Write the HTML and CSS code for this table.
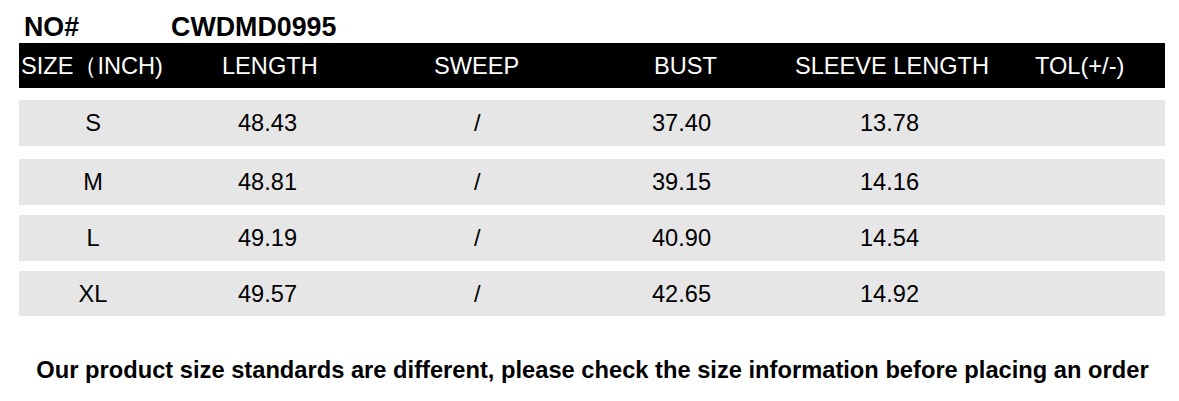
FILE: index.html
```html
<!DOCTYPE html>
<html>
<head>
<meta charset="utf-8">
<link rel="stylesheet" href="styles.css">
</head>
<body>
<div class="sheet">
  <div class="title">
    <span class="no">NO#</span>
    <span class="code">CWDMD0995</span>
  </div>
  <div class="table">
    <div class="row head">
      <div class="c c1">SIZE（INCH)</div>
      <div class="c c2">LENGTH</div>
      <div class="c c3">SWEEP</div>
      <div class="c c4">BUST</div>
      <div class="c c5">SLEEVE LENGTH</div>
      <div class="c c6">TOL(+/-)</div>
    </div>
    <div class="row data">
      <div class="c c1">S</div>
      <div class="c c2">48.43</div>
      <div class="c c3">/</div>
      <div class="c c4">37.40</div>
      <div class="c c5">13.78</div>
      <div class="c c6"></div>
    </div>
    <div class="row data">
      <div class="c c1">M</div>
      <div class="c c2">48.81</div>
      <div class="c c3">/</div>
      <div class="c c4">39.15</div>
      <div class="c c5">14.16</div>
      <div class="c c6"></div>
    </div>
    <div class="row data">
      <div class="c c1">L</div>
      <div class="c c2">49.19</div>
      <div class="c c3">/</div>
      <div class="c c4">40.90</div>
      <div class="c c5">14.54</div>
      <div class="c c6"></div>
    </div>
    <div class="row data">
      <div class="c c1">XL</div>
      <div class="c c2">49.57</div>
      <div class="c c3">/</div>
      <div class="c c4">42.65</div>
      <div class="c c5">14.92</div>
      <div class="c c6"></div>
    </div>
  </div>
  <p class="note">Our product size standards are different, please check the size information before placing an order</p>
</div>
</body>
</html>
```

FILE: styles.css
```css
html, body {
  margin: 0;
  padding: 0;
  background: #ffffff;
}

.sheet {
  width: 1179px;
  height: 401px;
  font-family: "Liberation Sans", Arial, sans-serif;
  color: #000;
  overflow: hidden;
}

.title {
  height: 43px;
  display: flex;
  align-items: flex-end;
  padding-left: 24px;
  font-weight: bold;
  font-size: 26.8px;
  line-height: 26px;
  box-sizing: border-box;
  padding-bottom: 3px;
}

.title .code {
  margin-left: 92px;
}

.table {
  margin-left: 19px;
  width: 1146px;
  display: flex;
  flex-direction: column;
}

.row {
  display: grid;
  grid-template-columns: 181px 200px 220px 140px 250px 155px;
  align-items: center;
  font-size: 23.6px;
  line-height: 26px;
}

.head {
  height: 45px;
  background: #000;
  color: #fff;
}

.data {
  height: 46px;
  background: #e6e6e6;
  margin-top: 10px;
}

.data:nth-child(2) {
  margin-top: 12px;
}

.data:nth-child(3) {
  margin-top: 13px;
}

.data:last-child {
  height: 45px;
}

.c {
  white-space: nowrap;
}

.head .c1 { padding-left: 2px; }
.head .c2 { padding-left: 22px; }
.head .c3 { padding-left: 34px; }
.head .c4 { padding-left: 34px; }
.head .c5 { padding-left: 35px; }
.head .c6 { padding-left: 25px; }

.data .c1 { width: 148px; text-align: center; }
.data .c2 { padding-left: 38px; }
.data .c3 { padding-left: 74px; }
.data .c4 { padding-left: 32px; }
.data .c5 { padding-left: 100px; }

.note {
  margin: 41px 0 0 0;
  text-align: center;
  font-weight: bold;
  font-size: 23.7px;
  line-height: 26px;
  padding-left: 6px;
}
```
